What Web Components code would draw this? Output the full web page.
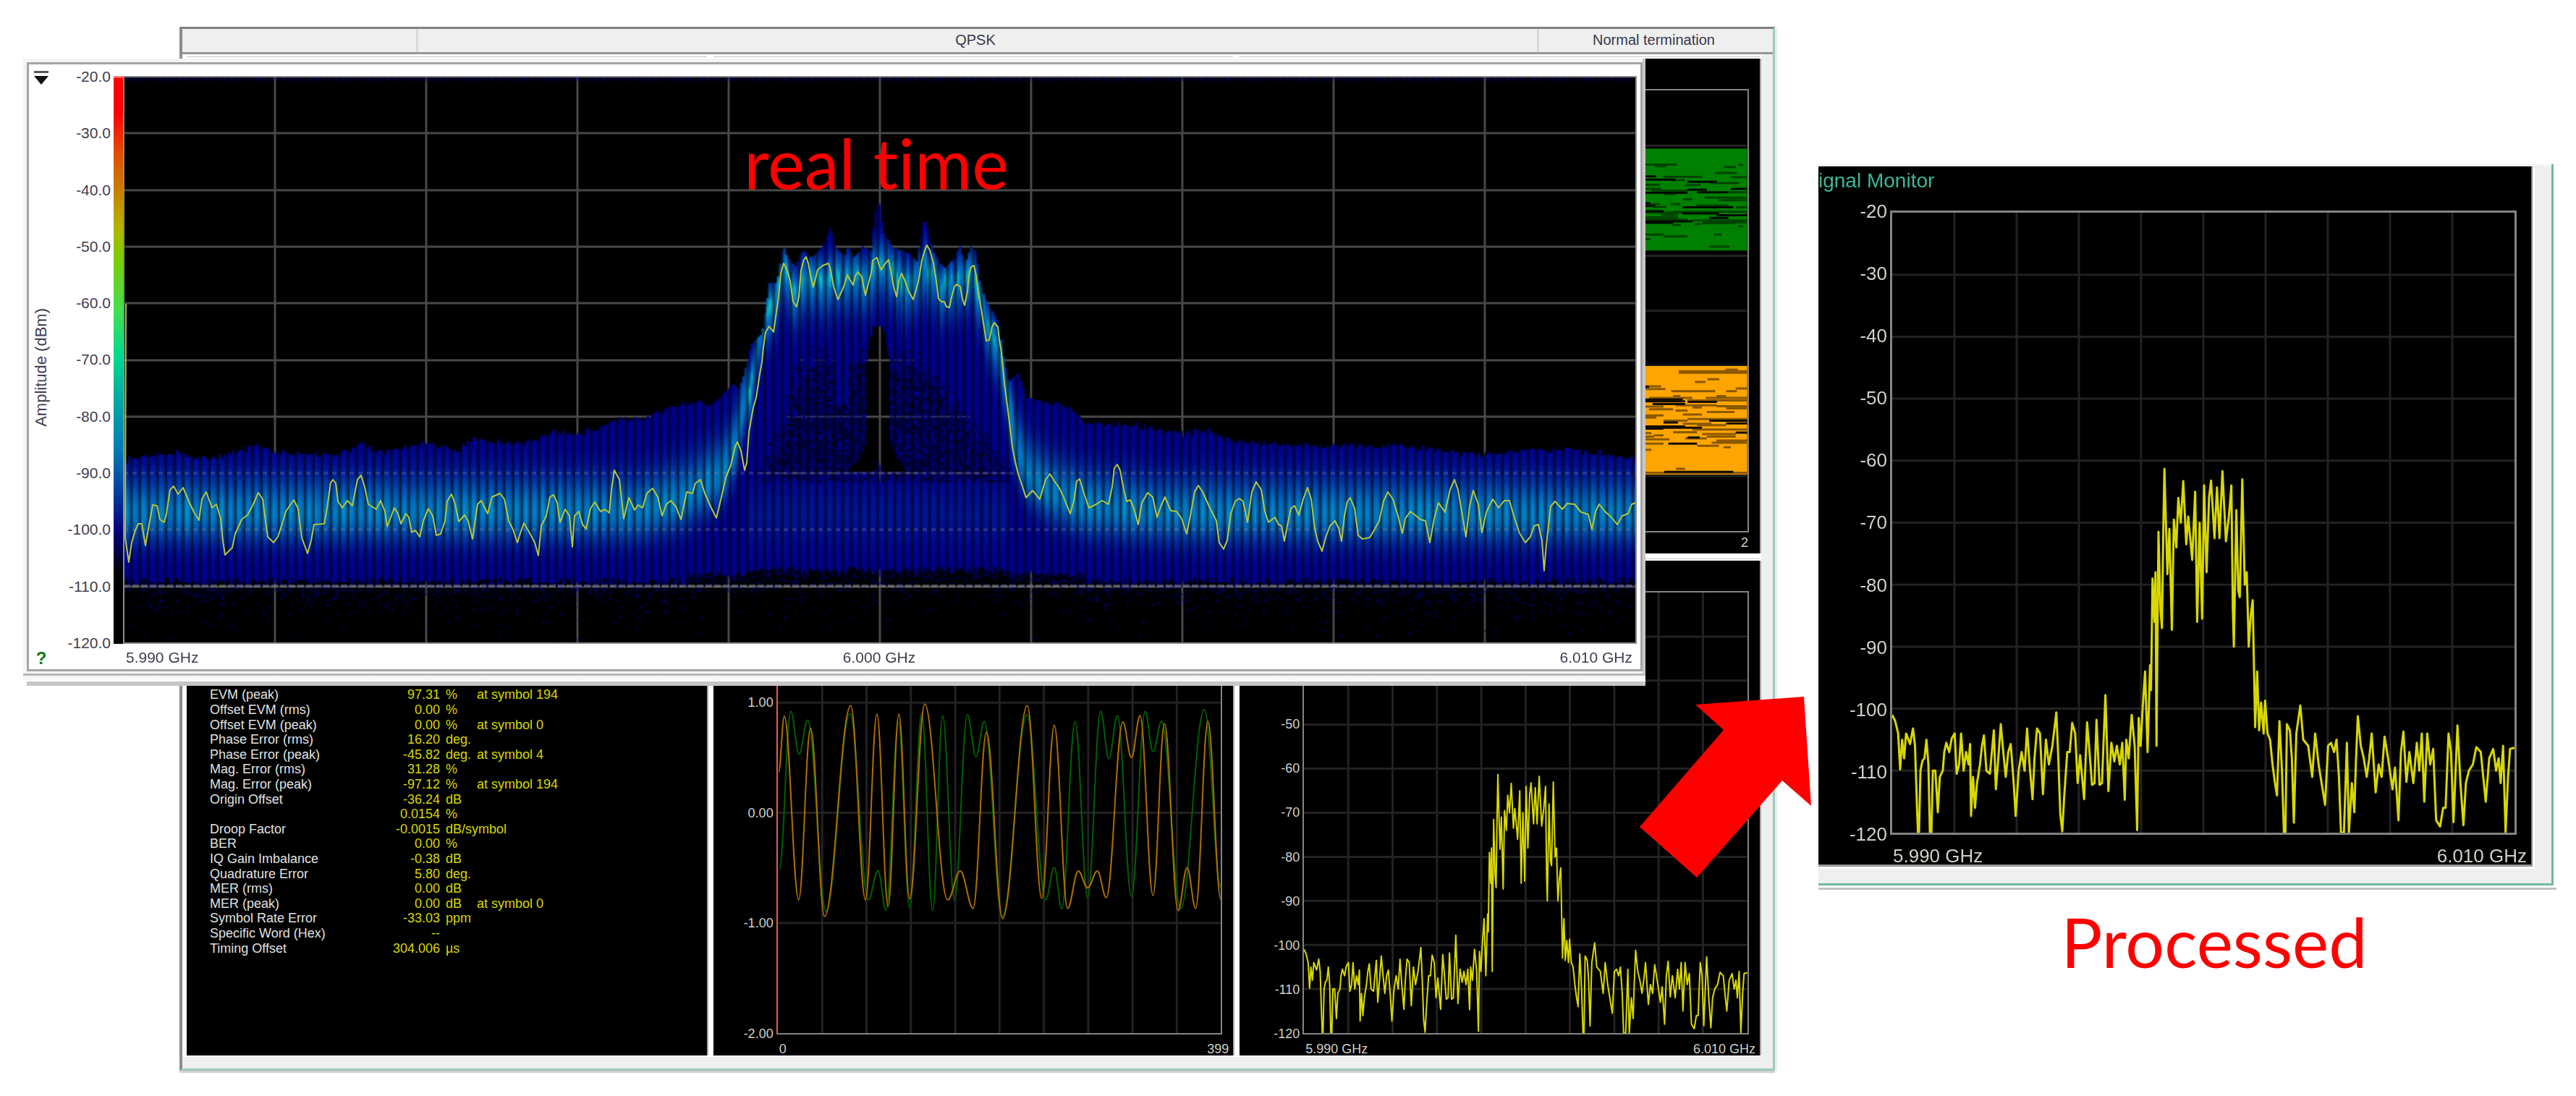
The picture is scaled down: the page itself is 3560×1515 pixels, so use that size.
<!DOCTYPE html>
<html lang="en">
<head>
<meta charset="utf-8">
<title>QPSK signal: real time and processed</title>
<style>
body { margin: 0; background: #fff; font-family: "Liberation Sans", Arial, sans-serif; }
</style>
</head>
<body>
<signal-stage>
  <analyzer-window slot="analyzer"></analyzer-window>
  <realtime-window slot="realtime">real time</realtime-window>
  <big-arrow slot="arrow"></big-arrow>
  <monitor-window slot="monitor">ignal Monitor</monitor-window>
  <span slot="caption">Processed</span>
</signal-stage>

<script>
const define = (name, html, setup) => {
  const tpl = document.createElement('template');
  tpl.innerHTML = html;
  customElements.define(name, class extends HTMLElement {
    constructor() {
      super();
      this.attachShadow({ mode: 'open' }).append(tpl.content.cloneNode(true));
    }
    connectedCallback() {
      if (this.ready) return;
      this.ready = true;
      if (setup) setup(this, this.shadowRoot);
    }
  });
};

const pairs = s => { const n = s.trim().split(/[\s,]+/).map(Number), r = []; for (let i = 0; i < n.length; i += 2) r.push([n[i], n[i + 1]]); return r; };
const random = seed => () => {
  seed = seed + 0x6D2B79F5 | 0;
  let t = Math.imul(seed ^ seed >>> 15, 1 | seed);
  t = t + Math.imul(t ^ t >>> 7, 61 | t) ^ t;
  return ((t ^ t >>> 14) >>> 0) / 4294967296;
};
const interp = (pts, x) => {
  if (x <= pts[0][0]) return pts[0][1];
  for (let i = 1; i < pts.length; i++) if (x <= pts[i][0]) {
    const [a, b] = pts[i - 1], [c, d] = pts[i];
    return b + (d - b) * (x - a) / (c - a);
  }
  return pts[pts.length - 1][1];
};

/* Swept spectrum: position on the axis, level in -dBm */
const SPECTRUM = pairs(`193 101,199 102,205 104,209 109.8,213 105,217 108,221 104,229 105.7,235 103.2,239 106,243 116,245 120,247 120,250 110,254 108.4,258 108,262 105,266 109,269 120,272 120,275 110,280 110,285 116.7,289 111,295 110,298 107,302 105.5,308 107,313 104.8,319 104,323 110.5,328 109,332 104,337 110,342 107,347 109,350 105.7,352 117.3,356 111,360 116,364 112,370 109,374 106,378 104.3,383 110,390 110.5,398 103.5,402 113,407 108,412 102.5,417 107,422 111,427 107,432 105.7,438 112,442 117.3,448 110,454 107,460 110,465 103.2,470 109,476 114.6,480 108,485 103.2,491 104,497 113.8,503 105,509 109,516 106,524 100.6,528 108,532 117,536 119.8,540 114,546 107,551 107,556 102.3,562 104,567 112,572 107.5,580 114.6,586 102.2,591 107,596 112.3,601 112,605 101.8,611 112.3,616 112,623 97.8,629 113.3,635 105.5,641 108.5,646 106,652 109,657 105.5,662 114.7,665 105,670 108,676 101,682 106,687 119.6,690 101.5,694 106,698 100,703 94,708 107,713 93,715 97,718 79,722 86,724 78,726 106,730 71.5,734 84,737 87,740 70,742 61.3,745 70,748 78.3,752 71,757 87.3,761 69.5,766 74,770 66,775 70,780 63.3,786 73.5,790 69,798 76,804 65,808 86,813 70,818 85.5,822 64,827 78,832 66,836 63.2,843 72.5,848 64.3,853 72.5,859 61.7,866 73,872 69,877 64,880 84,882 90,887 68,891 81,894 82,899 63,904 80,908 78,912 90,916 85,920 82.5,925 103,929 94,933 103.5,937 99,942 104,945 98.7,950 104,955 105,960 109,965 112,969 114,974 102,979 110,983 120,986 120,989 102.5,995 103.5,999 108,1003 118.4,1008 104,1016 99.5,1022 105,1032 106,1040 111,1046 104,1053 109,1058 111.5,1066 115.5,1072 106,1078 105.5,1084 107,1089 105,1094 111,1098 120,1104 120,1110 105.5,1114 120,1120 112,1125 116.7,1128 109,1132 101.2,1138 106,1144 108,1150 111,1155 108,1160 104,1168 113.5,1174 109,1180 111,1186 104.5,1193 108,1202 113,1207 109.5,1214 118,1219 107,1224 103.7,1230 111.8,1236 107,1244 112,1251 105.5,1256 110,1261 104,1266 115,1272 104,1278 109,1284 106.5,1290 118,1298 119,1304 116,1309 116,1315 104,1320 107,1325 118.3,1333 102.7,1339 112,1345 118.8,1350 112,1356 110,1364 109,1371 106.2,1380 107,1390 115,1397 108,1405 106.5,1411 110,1416 108,1420 112,1425 106,1430 120,1435 111,1439 106.5,1448 106.3`);

/* Turning points of the I and Q waveforms */
const WAVE_I = pairs(`232 400,248 190,288 878,321 235,360 940,433 150,474 878,506 182,537 903,567 182,597 875,639 145,703 878,738 770,774 910,811 250,856 948,925 150,965 872,1000 225,1037 910,1067 770,1093 833,1120 770,1145 870,1191 212,1215 345,1239 188,1275 862,1307 218,1345 918,1370 757,1394 910,1428 210,1464 875`);
const WAVE_Q = pairs(`234 765,266 172,289 332,313 205,364 920,431 180,482 878,509 768,531 915,566 215,597 908,631 180,661 918,689 188,722 880,758 185,782 342,805 210,855 940,924 185,976 878,1000 757,1021 912,1058 210,1093 872,1129 172,1152 350,1176 188,1215 865,1253 172,1275 322,1299 210,1352 912,1418 165,1464 830`);

/* Gaps between the eye diagram's lines: from, to, height. Wide gaps are black, narrow ones half-tone. */
const EYE_UP_WIDE = `522 650 403,522 570 396,700 822 408,522 700 433,700 780 426,740 870 432,880 948 424,522 600 475,522 565 463,680 890 466,678 830 480,820 948 484,522 720 498,522 640 501,522 545 457,790 870 490`;
const EYE_UP_THIN = `522 655 369,565 610 373,850 900 375,912 930 370,815 905 388,600 760 397,630 688 405,880 948 398,790 915 411,522 585 415,690 755 416,522 590 424,550 700 428,600 650 436,860 948 432,770 948 444,830 948 450,680 720 448,522 585 459,630 670 459,560 612 465,738 870 462,900 948 466,522 700 478,590 660 483,522 660 489,640 948 476,522 700 494,720 948 496,760 900 502,770 948 500,635 672 506,730 755 504,910 930 509,522 600 528,600 700 532,522 545 538,810 840 528,790 875 555`;
const EYE_DOWN_WIDE = `522 540 873,522 680 902,522 690 906,555 690 912,700 822 907,790 948 950,860 948 956,522 690 963,522 600 968,600 760 966,900 948 977,620 740 1002,700 750 988,603 890 1066,600 660 954`;
const EYE_DOWN_THIN = `663 948 838,663 948 841,730 775 862,782 832 856,858 908 834,522 590 872,522 608 878,632 815 883,860 905 883,900 948 877,540 720 898,775 948 898,640 670 894,820 860 894,522 600 918,650 820 915,700 948 904,820 948 917,860 948 922,540 640 924,720 760 920,780 895 930,650 700 927,522 600 938,522 570 943,680 760 936,700 948 946,600 700 950,680 800 957,740 860 960,522 550 978,640 740 976,560 600 983,720 948 970,760 900 980,522 625 992,522 560 986,690 780 990,780 900 986,820 948 995,522 600 1002,740 830 1007,800 948 1000,522 550 1016,850 880 1010,652 690 1059,522 948 1068`;

const line = pts => 'M' + pts.map(p => p.join(' ')).join('L');
const smooth = pts => 'M' + pts[0].join(' ') + pts.slice(1).map(([x, y], i) => {
  const [a, b] = pts[i], k = (x - a) * .38;
  return `C${a + k} ${b} ${x - k} ${y} ${x} ${y}`;
}).join('');
const gaps = s => s.split(',').map(t => { const [a, b, y] = t.trim().split(' '); return `M${a} ${y}H${b}`; }).join('');

const TRACES = {
  spectrum: () => `<svg viewBox="193 20 1255 100" preserveAspectRatio="none"><path d="${line(SPECTRUM)}" stroke="#d8d800"/></svg>`,
  wave: () => `<svg viewBox="230 -273 1235 1650" preserveAspectRatio="none"><path d="${smooth(WAVE_Q)}" stroke="#006000"/><path d="${smooth(WAVE_I)}" stroke="#b06e00"/></svg>`,
  eye: () => `<svg viewBox="-894 201 1842 999" preserveAspectRatio="none"><rect x="-894" y="333" width="1842" height="231" fill="#008000"/><rect x="-894" y="826" width="1842" height="246" fill="#ffa500"/><g style="--stroke:3px"><path d="${gaps(EYE_UP_THIN)}" stroke="#004400"/><path d="${gaps(EYE_UP_WIDE)}" stroke="#000c00"/><path d="${gaps(EYE_DOWN_THIN)}" stroke="#8a5900"/><path d="${gaps(EYE_DOWN_WIDE)}" stroke="#140d00"/></g></svg>`
};

/* Chart: y labels | plot with grid, over a row of x labels */
define('scope-chart', `
<style>
:host { display: grid; grid-template-columns: var(--gutter, 88px) 1fr; grid-template-rows: var(--plot, 611px) auto; padding-right: var(--edge, 16px); font-size: var(--size, 18px); line-height: 20px; color: #d0d0c8; }
.y { display: flex; flex-direction: column; justify-content: space-between; text-align: right; margin: -10px 5px -10px 0; }
.y span { height: 20px; }
.plot { display: grid; border: var(--frame, 2px) solid #848484; margin: -1px; }
.plot > * { grid-area: 1 / 1; min-width: 0; min-height: 0; }
svg { width: 100%; height: 100%; display: block; fill: none; }
path { vector-effect: non-scaling-stroke; stroke-width: var(--stroke, 2px); stroke-linejoin: round; }
.grid path { stroke: #222; stroke-width: 3px; }
.x { grid-column: 2; display: flex; justify-content: space-between; margin: var(--drop, 11px) var(--over, -10px) 0 3px; }
:host([kind="wave"]) .plot { border-left-color: #e45c5c; }
</style>
<div class="y"></div>
<div class="plot"><svg class="grid" viewBox="0 0 100 100" preserveAspectRatio="none"><path/></svg><div class="trace"></div></div>
<div class="x"></div>`, (host, root) => {
  const fill = (sel, list) => { root.querySelector(sel).innerHTML = (list || '').split(' | ').map(t => `<span>${t}</span>`).join(''); };
  fill('.y', host.getAttribute('y'));
  fill('.x', host.getAttribute('x'));
  const cols = +host.getAttribute('cols'), rows = +host.getAttribute('rows');
  let d = '';
  for (let i = 1; i < cols; i++) d += `M${100 * i / cols} 0V100`;
  for (let i = 1; i < rows; i++) d += `M0 ${100 * i / rows}H100`;
  root.querySelector('.grid path').setAttribute('d', d);
  root.querySelector('.trace').innerHTML = TRACES[host.getAttribute('kind')]();
});

const RESULTS = [
  ['EVM (peak)', '97.31', '%', 'at symbol 194'], ['Offset EVM (rms)', '0.00', '%', ''],
  ['Offset EVM (peak)', '0.00', '%', 'at symbol 0'], ['Phase Error (rms)', '16.20', 'deg.', ''],
  ['Phase Error (peak)', '-45.82', 'deg.', 'at symbol 4'], ['Mag. Error (rms)', '31.28', '%', ''],
  ['Mag. Error (peak)', '-97.12', '%', 'at symbol 194'], ['Origin Offset', '-36.24', 'dB', ''],
  ['', '0.0154', '%', ''], ['Droop Factor', '-0.0015', 'dB/symbol', ''], ['BER', '0.00', '%', ''],
  ['IQ Gain Imbalance', '-0.38', 'dB', ''], ['Quadrature Error', '5.80', 'deg.', ''],
  ['MER (rms)', '0.00', 'dB', ''], ['MER (peak)', '0.00', 'dB', 'at symbol 0'],
  ['Symbol Rate Error', '-33.03', 'ppm', ''], ['Specific Word (Hex)', '--', '', ''], ['Timing Offset', '304.006', 'µs', '']
];

define('result-table', `
<style>
:host { display: block; padding: 0 32px 138px; }
table { width: 100%; height: 371px; table-layout: fixed; border-collapse: collapse; font-size: 18px; line-height: 20px; }
th { width: 218px; font-weight: 400; text-align: left; color: #e0e0e0; }
th, td { padding: 0; white-space: nowrap; }
td { color: #d8d800; }
.v { width: 100px; text-align: right; }
.u { width: 43px; padding-left: 8px; }
</style>
<table><tbody></tbody></table>`, (host, root) => {
  root.querySelector('tbody').innerHTML = RESULTS.map(([n, v, u, s]) =>
    `<tr><th scope="row">${n}</th><td class="v">${v}</td><td class="u">${u}</td><td>${s}</td></tr>`).join('');
});

define('analyzer-window', `
<style>
:host { display: block; border: 3px solid #9acbbd; border-top-color: #808080; border-left: 4px solid #8c8c8c; background: #efefef; box-shadow: 3px 0 #e3f1ec, 0 3px #d2cece; }
header { display: grid; grid-template-columns: 323fr 1549fr 326fr; height: 32px; border-bottom: 3px solid #969696; font-size: 20px; line-height: 30px; text-align: center; color: #383848; }
header span + span { border-left: 3px solid #d8d8d8; }
header span:nth-child(2) { padding-right: 6px; }
header span:last-child { padding-right: 6px; }
.panes { display: grid; grid-template-columns: repeat(3, 1fr); grid-template-rows: 684px 684px; gap: 10px 9px; background: #fff; padding: 6px 2px 2px 6px; margin-right: 16px; }
section { display: flex; flex-direction: column; justify-content: flex-end; background: #000; min-width: 0; box-shadow: 0 -2px #fff, 0 -3px #c4c4c4, 2px 0 #a8a8a8; }
section.chart { justify-content: flex-start; padding-top: 43px; }
.foot { height: 16px; }
</style>
<header><span></span><span>QPSK</span><span>Normal termination</span></header>
<div class="panes">
  <section></section><section></section>
  <section class="chart"><scope-chart kind="eye" cols="1" rows="8" y="" x="0 | 2" style="--drop:5px;--over:0px"></scope-chart></section>
  <section><result-table></result-table></section>
  <section class="chart"><scope-chart kind="wave" cols="10" rows="4" y="2.00 | 1.00 | 0.00 | -1.00 | -2.00" x="0 | 399"></scope-chart></section>
  <section class="chart"><scope-chart kind="spectrum" cols="10" rows="10" y="-20 | -30 | -40 | -50 | -60 | -70 | -80 | -90 | -100 | -110 | -120" x="5.990 GHz | 6.010 GHz"></scope-chart></section>
</div>
<div class="foot"></div>`);

define('monitor-window', `
<style>
:host { display: block; padding: 0 4px 3px 0; border-bottom: 3px solid #c2c2c2; }
.frame { border: solid #6fb8a3; border-width: 0 3px 3px 0; background: #efefef; padding: 3px 26px 23px 0; box-shadow: inset 0 3px #f4f4f4; }
.pane { background: #000; border-right: 2px solid #888; border-bottom: 3px solid #999; height: 965px; box-shadow: 3px 3px #fff; --gutter: 100px; --plot: 861px; --edge: 21px; --size: 26px; --drop: 20px; --over: -15px; --stroke: 3px; --frame: 3px; }
h2 { margin: 0; height: 62px; box-sizing: border-box; padding-top: 4px; font-size: 28px; font-weight: 400; line-height: 32px; color: #3db598; }
</style>
<div class="frame"><div class="pane">
  <h2><slot></slot></h2>
  <scope-chart kind="spectrum" cols="10" rows="10" y="-20 | -30 | -40 | -50 | -60 | -70 | -80 | -90 | -100 | -110 | -120" x="5.990 GHz | 6.010 GHz"></scope-chart>
</div></div>`);

/* Latest sweep of the real-time view, in three sections, each with its own scale */
const SWEEP = [
  [1 / 1.3067, -171, 1 / 3, 394, `227 -240,226 730,232 830,238 750,244 700,250 672,256 672,262 762,270 660,276 595,284 598,289 655,297 667,301 630,307 530,313 515,322 550,331 522,341 580,350 625,359 658,365 570,372 540,383 605,391 592,398 650,403 740,407 802,419 770,425 715,437 655,447 635,457 590,466 542,474 570,480 660,484 725,494 750,502 725,508 680,516 620,530 574,538 610,545 730,556 795,562 740,567 675,585 672,591 610,597 500,601 488,606 505,610 580,618 605,627 575,637 598,645 490,652 470,658 520,665 590,679 612,687 576,695 620,699 685,712 605,719 630,724 672,733 630,738 645,743 708,750 700,758 727,765 660,773 610,781 640,788 720,796 715,804 660,808 580,815 548,822 590,829 662,839 635,845 660,853 735,858 650,862 590,869 575,881 630,888 560,903 545,911 570,918 660,926 695,934 750,940 710,946 670,955 705,965 750,972 803,978 680,986 640,993 560,999 553,1006 585,1012 667,1020 612,1028 640,1033 768,1038 640,1046 620,1052 675,1059 692,1066 610,1074 583,1085 620,1093 612,1100 628,1104 530,1110 450,1118 490,1126 652,1136 565,1146 615,1153 595,1161 606,1168 545,1179 525,1188 560,1196 640,1203 590,1211 575,1220 600,1229 655,1240 540,1250 545,1256 505,1265 488,1273 545,1283 600,1294 648,1303 560,1311 480,1320 430,1327 350,1332 332,1338 370,1344 450,1349 420,1353 290,1360 190,1366 150,1372 50`],
  [1 / 2.24, 729, 1 / 2.851, 44, `343 998,348 940,354 880,364 857,378 880,386 820,394 740,402 650,410 610,420 640,430 680,440 760,450 782,456 740,464 640,472 595,480 585,487 610,494 670,502 705,508 670,516 635,530 618,548 610,556 640,564 700,578 752,588 720,596 700,607 655,618 680,624 695,632 660,641 645,652 665,662 735,672 690,680 650,686 600,698 588,706 620,712 635,722 615,734 595,742 640,750 700,759 740,766 680,774 650,786 680,798 720,811 752,820 715,829 670,838 600,846 560,854 540,862 560,874 610,882 680,890 750,898 760,908 762,914 780,922 785,930 745,938 700,946 692,956 700,964 750,971 775,978 720,984 660,990 625,998 618,1006 660,1012 725,1022 790,1030 860,1038 915,1046 912,1054 860,1062 845,1072 860,1078 910,1084 960,1092 1080,1102 1170,1110 1260,1118 1330,1126 1390,1136 1440,1146 1480`],
  [1 / 1.3067, 1029, 1 / 3, 394, `285 565,297 533,310 570,320 490,328 465,336 495,344 520,352 555,364 630,371 580,376 495,382 485,389 545,399 605,411 592,422 575,434 590,440 520,444 440,449 425,455 450,461 530,467 580,473 572,480 610,487 675,494 585,505 542,513 560,522 645,529 595,536 562,546 618,557 622,566 650,575 715,582 640,589 540,596 514,604 540,616 600,628 660,634 750,641 778,648 740,655 630,662 580,670 568,677 580,685 665,693 540,701 498,709 530,716 620,723 665,735 645,741 675,746 680,751 745,757 680,763 610,769 598,778 635,785 570,793 522,800 570,806 690,812 745,819 787,826 730,834 680,843 660,849 690,854 745,860 640,865 580,870 565,878 610,884 720,892 735,905 730,914 700,922 660,930 580,938 540,947 570,956 640,964 710,970 650,979 620,989 640,997 655,1006 660,1014 750,1022 650,1030 585,1042 625,1050 530,1058 488,1065 530,1072 620,1079 725,1086 600,1093 534,1101 590,1108 708,1116 625,1128 570,1138 605,1148 577,1158 577,1166 640,1176 710,1187 750,1196 725,1202 680,1210 675,1216 740,1221 868,1225 760,1232 600,1240 578,1253 612,1262 588,1275 590,1287 625,1300 632,1307 695,1313 620,1320 590,1330 620,1342 645,1352 675,1361 640,1372 630,1378 590,1385 585`]
];
const sweep = SWEEP.flatMap(([kx, ox, ky, oy, s]) => pairs(s).map(([x, y]) => [Math.round(x * kx + ox), Math.round(y * ky + oy)]));

/* Upper edge of the persistence cloud, and the line where hits are densest */
const EDGE = pairs(`171 641,205 634,245 630,290 640,355 620,400 632,470 632,500 615,520 630,590 616,630 628,650 612,720 618,765 602,820 600,845 585,885 585,915 572,940 565,968 553,980 566,1000 545,1014 532,1022 537,1033 500,1038 476,1054 459,1063 392,1074 392,1078 367,1083 339,1090 357,1100 367,1110 346,1123 357,1137 341,1141 332,1149 314,1155 341,1168 353,1173 339,1181 357,1192 341,1205 346,1209 297,1215 273,1221 318,1233 341,1257 350,1268 360,1276 308,1280 308,1293 353,1306 371,1320 357,1327 339,1334 364,1342 341,1349 346,1355 392,1366 420,1382 448,1387 490,1395 529,1408 515,1420 550,1436 553,1485 571,1498 588,1560 590,1629 605,1670 597,1697 613,1782 620,1935 620,2049 633,2149 623,2260 637`);
const RIDGE = pairs(`171 710,880 708,940 692,975 672,1000 655,1018 615,1028 560,1040 525,1050 460,1062 430,1075 400,1083 368,1095 400,1110 392,1130 380,1150 386,1165 376,1200 388,1215 362,1235 378,1262 392,1278 365,1300 395,1325 388,1342 368,1352 400,1368 455,1382 480,1392 540,1402 610,1420 655,1450 680,1500 700,1600 710,2261 712`);

const paintCloud = canvas => {
  const W = canvas.width, H = canvas.height, g = canvas.getContext('2d'), img = g.createImageData(W, H), rnd = random(7);
  for (let i = 0; i < W; i++) {
    const x = 171 + 3 * (i + .5), edge = interp(EDGE, x), ridge = interp(RIDGE, x);
    const inBand = x > 1035 && x < 1395, glow = .85 + rnd() * .25;
    const stripe = [.95, 1, .8, .4][i % 4];
    const low = (inBand ? 788 : x > 950 && x < 1500 ? 794 : 804) + rnd() * 9 - 5;
    const ragged = edge - (edge > 560 ? rnd() * 8 : 0);
    const shift = inBand ? rnd() * 16 - 8 : 0;
    for (let j = 0; j < H; j++) {
      const y = 106 + 3 * (j + .5), o = 4 * (j * W + i);
      let a = y > ragged ? 1 : 0;
      if (y > low) a = rnd() < .7 * Math.exp(-(y - low) / 17) ? .3 + rnd() * .45 : 0;
      if (y < 112) a = i % 3 ? .45 : 0;
      const up = inBand ? 20 : 34, down = inBand ? 32 : 27, dy = y - ridge - shift;
      const s = dy < 0 ? up : down;
      let t = y < 112 ? 0 : Math.exp(-dy * dy / (2 * s * s)) * glow;
      if (inBand && y > 660) t = Math.max(t, .16 * Math.exp(-((y - 712) ** 2) / 1800));
      if (inBand) {
        const off = x - 1214, side = Math.abs(off);
        const half = y < 452 ? 0 : y < 500 ? 7 + (y - 452) * .18 : y < 606 ? 16 : 16 + Math.pow((y - 606) / 45, 1.6) * 24;
        const stem = y > 636 && side < (y - 636) * .3;
        if (y > 450 && y < 653 && side < half) a = stem ? .8 : 0;
        else if (y > 470 && y < 666) {
          const reach = off < 0 ? 108 + (y - 480) * .36 : 44 + (y - 462) * .78;
          const clear = (x > 1154 && x < 1172 && y < 560) || (x > 1146 && x < 1190 && y < 500);
          const fade = Math.min(1, (reach - side) / 30) * Math.min(1, (y - 470) / 60);
          if (side < reach && !clear && rnd() < fade * (y > 654 ? .5 : .85)) a = .25 + rnd() * .6;
        }
      }
      let r = 0, gr = 132 * t, b = 144 + 62 * t;
      if (t > .92 && inBand) { gr += 420 * (t - .92); r = 60 * (t - .92); }
      img.data[o] = r * stripe; img.data[o + 1] = gr * stripe; img.data[o + 2] = b * stripe;
      img.data[o + 3] = 255 * a;
    }
  }
  g.putImageData(img, 0, 0);
};

define('persistence-plot', `
<style>
:host { display: grid; background: #000; outline: 2px solid #8c8c8c; outline-offset: -1px; }
svg, canvas, .note { grid-area: 1 / 1; width: 100%; height: 100%; min-width: 0; min-height: 0; display: block; }
path { fill: none; vector-effect: non-scaling-stroke; }
.note { box-sizing: border-box; padding: 71px 10px 0 0; text-align: center; font: 96px/96px Lato, sans-serif; font-variant-ligatures: none; color: #f00; }
</style>
<svg viewBox="0 0 2090 783" preserveAspectRatio="none"><path class="grid" stroke="#484848" stroke-width="3"/></svg>
<canvas width="697" height="261"></canvas>
<svg viewBox="0 0 2090 783" preserveAspectRatio="none">
  <path d="M0 548H2090M0 626H2090" stroke="#8c8c96" stroke-opacity=".25" stroke-width="4" stroke-dasharray="6 6"/>
  <path d="M0 704H2090" stroke="#8c8c96" stroke-opacity=".5" stroke-width="4" stroke-dasharray="9 3"/>
  <path class="trace" stroke="#b4c43c" stroke-width="2" stroke-linejoin="round"/>
</svg>
<div class="note"><slot></slot></div>`, (host, root) => {
  let d = '';
  for (let i = 1; i < 10; i++) d += `M${209 * i} 0V783M0 ${Math.round(78.3 * i)}H2090`;
  root.querySelector('.grid').setAttribute('d', d);
  root.querySelector('.trace').setAttribute('d', line(sweep));
  paintCloud(root.querySelector('canvas'));
});

define('realtime-window', `
<style>
:host { display: block; color: #403c50; font-size: 21px; line-height: 24px; }
.outer { background: #f4f4f4; padding: 5px 0 3px 5px; border-right: 4px solid #c8c8c8; border-bottom: 3px solid #b8b8b8; }
.frame { display: grid; grid-template-columns: 30px 83px 18px 1fr; border: 3px solid #a4a4a4; background: #fff; padding-right: 6px; }
.side { grid-row: 1 / 3; display: flex; flex-direction: column; justify-content: space-between; align-items: center; padding: 8px 0 3px 4px; }
button { border: 0; padding: 0; background: none; display: block; }
.side svg { display: block; width: 20px; height: 20px; }
.axis { writing-mode: vertical-rl; transform: rotate(180deg); font-size: 22px; }
.help { font: bold 24px/24px "Liberation Sans", Arial, sans-serif; color: #0a7a12; }
.y { display: flex; flex-direction: column; justify-content: space-between; text-align: right; margin: 5px 0 -12px; height: 807px; }
.bar { margin: 16px 4px 0; width: 14px; height: 785px; background: linear-gradient(#ff8080 0 2px, #f00 3px, #f00 50px, #e05000 110px, #c88000 160px, #b4b400 210px, #80cc00 248px, #40e050 325px, #00d890 390px, #00b0a0 440px, #0080b4 510px, #0040a0 575px, #000080 630px, #000 690px); }
persistence-plot { margin-top: 17px; height: 783px; }
.x { grid-column: 4; display: flex; justify-content: space-between; height: 28px; padding: 7px 5px 0 3px; }
.gap { height: 8px; background: linear-gradient(#f4f4f4 50%, #fff); }
.ledge { height: 6px; margin-left: 5px; background: #c6c6c6; }
</style>
<div class="outer"><div class="frame">
  <div class="side">
    <button aria-label="Menu"><svg viewBox="0 0 20 20"><path d="M0 1H20V4H0Z" fill="#555"/><path d="M0 8H20L10 20Z" fill="#111"/></svg></button>
    <span class="axis">Amplitude (dBm)</span>
    <button class="help">?</button>
  </div>
  <div class="y"><span>-20.0</span><span>-30.0</span><span>-40.0</span><span>-50.0</span><span>-60.0</span><span>-70.0</span><span>-80.0</span><span>-90.0</span><span>-100.0</span><span>-110.0</span><span>-120.0</span></div>
  <div class="bar"></div>
  <persistence-plot><slot></slot></persistence-plot>
  <div class="x"><span>5.990 GHz</span><span>6.000 GHz</span><span>6.010 GHz</span></div>
</div></div>
<div class="gap"></div><div class="ledge"></div>`);

define('big-arrow', `
<style>:host { display: block; } svg { display: block; width: 100%; height: 250px; }</style>
<svg viewBox="0 0 237 250" preserveAspectRatio="none"><polygon fill="#f00" points="0,180 116,46 77,11 227,0 237,151 197,116 79,250"/></svg>`);

/* Overlapping windows share one grid row; the columns are their left and right edges */
define('signal-stage', `
<style>
:host { display: grid; grid-template-columns: 32fr 216fr 2018fr 8fr 179fr 50fr 10fr 1020fr 27fr; align-items: start; overflow: hidden; padding-bottom: 32px; }
.analyzer { grid-area: 1 / 3 / 2 / 6; margin-top: 37px; }
.realtime { grid-area: 1 / 2 / 2 / 5; margin-top: 81px; }
.result { grid-area: 1 / 8 / 2 / 9; margin-top: 227px; }
.arrow { grid-area: 1 / 4 / 2 / 7; margin-top: 963px; }
.result p { margin: 23px 0 0; padding-left: 74px; text-align: center; font: 95px/96px Lato, sans-serif; color: #f00; }
div { min-width: 0; }
</style>
<div class="analyzer"><slot name="analyzer"></slot></div>
<div class="realtime"><slot name="realtime"></slot></div>
<div class="result"><slot name="monitor"></slot><p><slot name="caption"></slot></p></div>
<div class="arrow"><slot name="arrow"></slot></div>`);
</script>
</body>
</html>
